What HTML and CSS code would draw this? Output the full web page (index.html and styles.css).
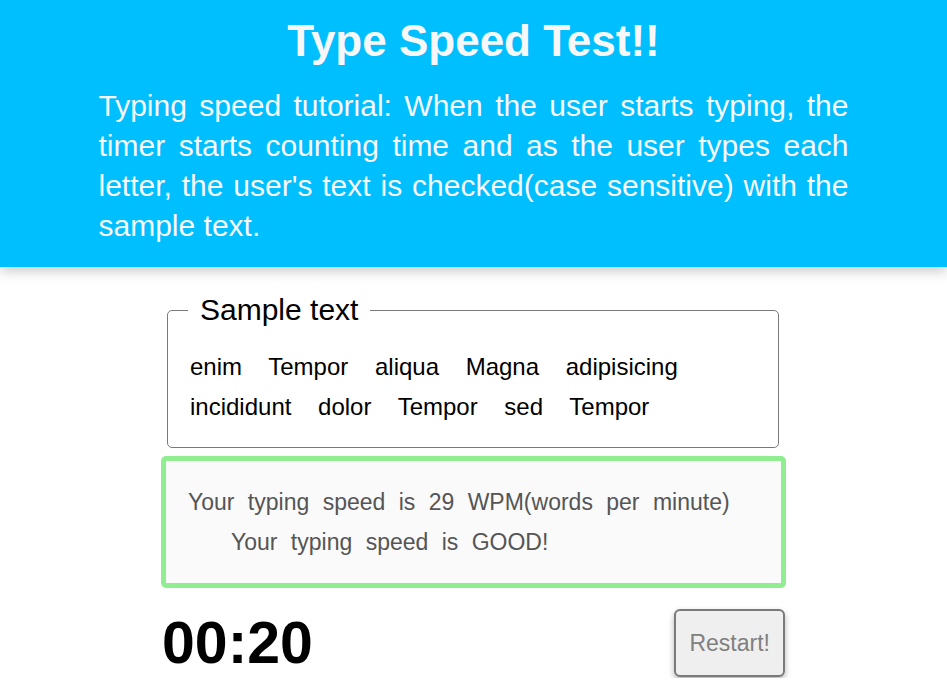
FILE: index.html
```html
<!DOCTYPE html>
<html lang="en">
<head>
<meta charset="utf-8">
<title>Type Speed Test!!</title>
<link rel="stylesheet" href="styles.css">
</head>
<body>
<header class="header">
  <h1 class="title">Type Speed Test!!</h1>
  <p class="intro">Typing speed tutorial: When the user starts typing, the timer starts counting time and as the user types each letter, the user's text is checked(case sensitive) with the sample text.</p>
</header>
<main class="main">
  <fieldset class="sample">
    <legend class="sample-legend">Sample text</legend>
    <div class="sample-words">enim Tempor aliqua Magna adipisicing incididunt dolor Tempor sed Tempor</div>
  </fieldset>
  <div class="result">
    <div class="result-line">Your typing speed is 29 WPM(words per minute)</div>
    <div class="result-line result-indent">Your typing speed is GOOD!</div>
  </div>
  <div class="controls">
    <div class="timer">00:20</div>
    <button class="restart" type="button">Restart!</button>
  </div>
</main>
</body>
</html>
```
FILE: styles.css
```css
html, body {
  margin: 0;
  padding: 0;
  background: #ffffff;
}

body {
  font-family: "Liberation Sans", Arial, sans-serif;
  color: #000;
}

.header {
  background: #00bfff;
  color: #f7f7f7;
  padding: 16px 0 21px;
  box-shadow: 0 4px 12px rgba(0, 0, 0, 0.22);
}

.title {
  margin: 0;
  text-align: center;
  font-size: 44px;
  font-weight: bold;
  line-height: 50px;
}

.intro {
  width: 750px;
  margin: 20px auto 0;
  font-size: 30px;
  line-height: 40px;
  text-align: justify;
}

.main {
  width: 625px;
  margin: 0 auto;
  padding-top: 26px;
}

.sample {
  margin: 0 7px 0 6px;
  padding: 20px 20px 20px 20px;
  border: 1px solid #7a7a7a;
  border-radius: 5px;
}

.sample-legend {
  font-size: 30px;
  padding: 0 12px;
  line-height: 34px;
}

.sample-words {
  padding-left: 2px;
  font-size: 24px;
  line-height: 40px;
  word-spacing: 20px;
}

.result {
  margin-top: 8px;
  border: 5px solid #90ee90;
  border-radius: 5px;
  background: #fafafa;
  padding: 21px 21px 21px 22px;
  color: #555;
  font-size: 23px;
  line-height: 40px;
  word-spacing: 7px;
}

.result-indent {
  padding-left: 43px;
}

.controls {
  margin-top: 21px;
  display: flex;
  justify-content: space-between;
  align-items: flex-start;
}

.timer {
  font-size: 59px;
  font-weight: bold;
  line-height: 69px;
  padding-left: 1px;
}

.restart {
  height: 68px;
  padding: 0 13px;
  margin-right: 1px;
  font-family: "Liberation Sans", Arial, sans-serif;
  font-size: 23px;
  color: #808080;
  background: #efefef;
  border: 2px solid #7a7a7a;
  border-radius: 6px;
  box-shadow: 0 3px 6px rgba(0, 0, 0, 0.3);
}
```
